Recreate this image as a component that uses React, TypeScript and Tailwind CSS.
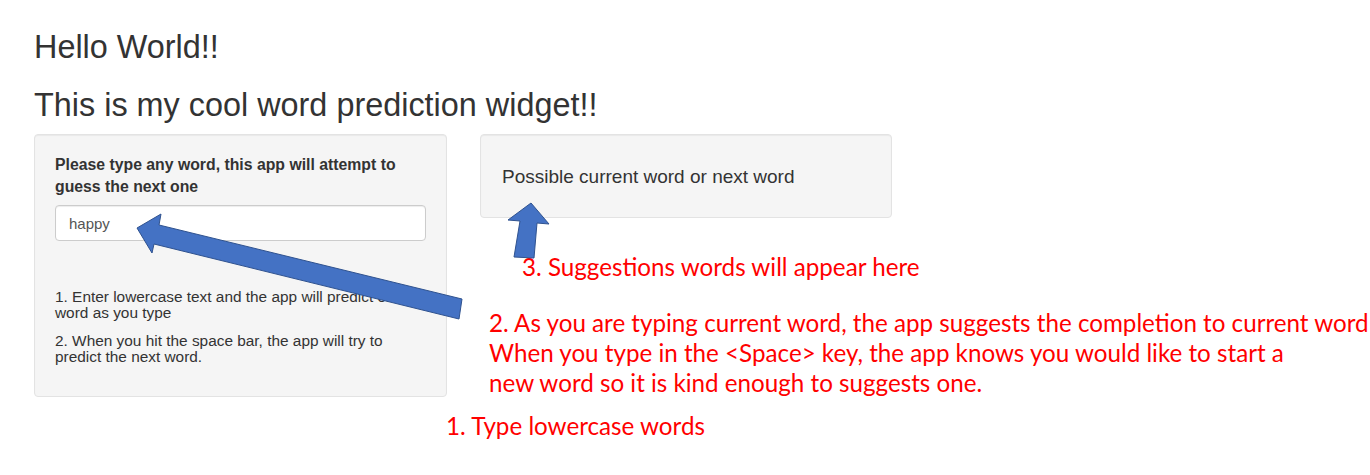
import React from 'react';

export default function App() {
  return (
    <div className="relative w-[1370px] h-[475px] overflow-hidden bg-white pl-[34px] font-['Liberation_Sans',Arial,sans-serif] text-[#333]">
      {/* Headings */}
      <h1 className="pt-[30px] text-[32.4px] leading-[35px] font-normal">Hello World!!</h1>
      <h2 className="mt-[23px] text-[32.4px] leading-[35px] font-normal">This is my cool word prediction widget!!</h2>

      <div className="mt-[11px] grid grid-cols-[413px_412px] gap-x-[33px] items-start">
        {/* Sidebar */}
        <div className="rounded-[4px] border border-[#e3e3e3] bg-[#f5f5f5] px-[20px] pt-[19px] pb-[31px] shadow-[inset_0_1px_1px_rgba(0,0,0,0.05)]">
          <label className="block text-[15.8px] leading-[22px] font-bold">
            Please type any word, this app will attempt to guess the next one
          </label>
          <input
            type="text"
            defaultValue="happy"
            className="mt-[7px] block h-[36px] w-full rounded-[4px] border border-[#ccc] bg-white px-[13px] text-[15px] text-[#555] outline-none shadow-[inset_0_1px_1px_rgba(0,0,0,0.075)]"
          />
          <p className="mt-[48px] text-[15.4px] leading-[16px]">
            1. Enter lowercase text and the app will predict one word as you type
          </p>
          <p className="mt-[12px] text-[15.4px] leading-[16px]">
            2. When you hit the space bar, the app will try to predict the next word.
          </p>
        </div>

        {/* Main */}
        <div>
          <div className="rounded-[4px] border border-[#e3e3e3] bg-[#f5f5f5] pl-[21px] pt-[31px] pb-[30px] shadow-[inset_0_1px_1px_rgba(0,0,0,0.05)]">
            <h4 className="text-[19px] leading-[21px] font-normal">Possible current word or next word</h4>
          </div>

          {/* Annotations */}
          <div className="font-['Lato','Liberation_Sans',sans-serif] text-[24.2px] leading-[30px] text-[#ff0000] whitespace-nowrap">
            <p className="mt-[34px] ml-[42px]">3. Suggestions words will appear here</p>
            <div className="mt-[26px] ml-[9px]">
              <p>2. As you are typing current word, the app suggests the completion to current word</p>
              <p>When you type in the &lt;Space&gt; key, the app knows you would like to start a</p>
              <p>new word so it is kind enough to suggests one.</p>
            </div>
            <p className="mt-[13px] ml-[-34px]">1. Type lowercase words</p>
          </div>
        </div>
      </div>

      {/* Arrows drawn over the page */}
      <svg className="pointer-events-none absolute left-0 top-0" width="1370" height="475" viewBox="0 0 1370 475">
        <polygon
          points="137,228 161,214 159,225 462,299 459,319 154,244 152,253"
          fill="#4472c4"
          stroke="#2f528f"
          strokeWidth="1"
          strokeLinejoin="miter"
        />
        <polygon
          points="531,203 549,224 537,223 534,258 514,257 520,221 508,220"
          fill="#4472c4"
          stroke="#2f528f"
          strokeWidth="1"
          strokeLinejoin="miter"
        />
      </svg>
    </div>
  );
}
